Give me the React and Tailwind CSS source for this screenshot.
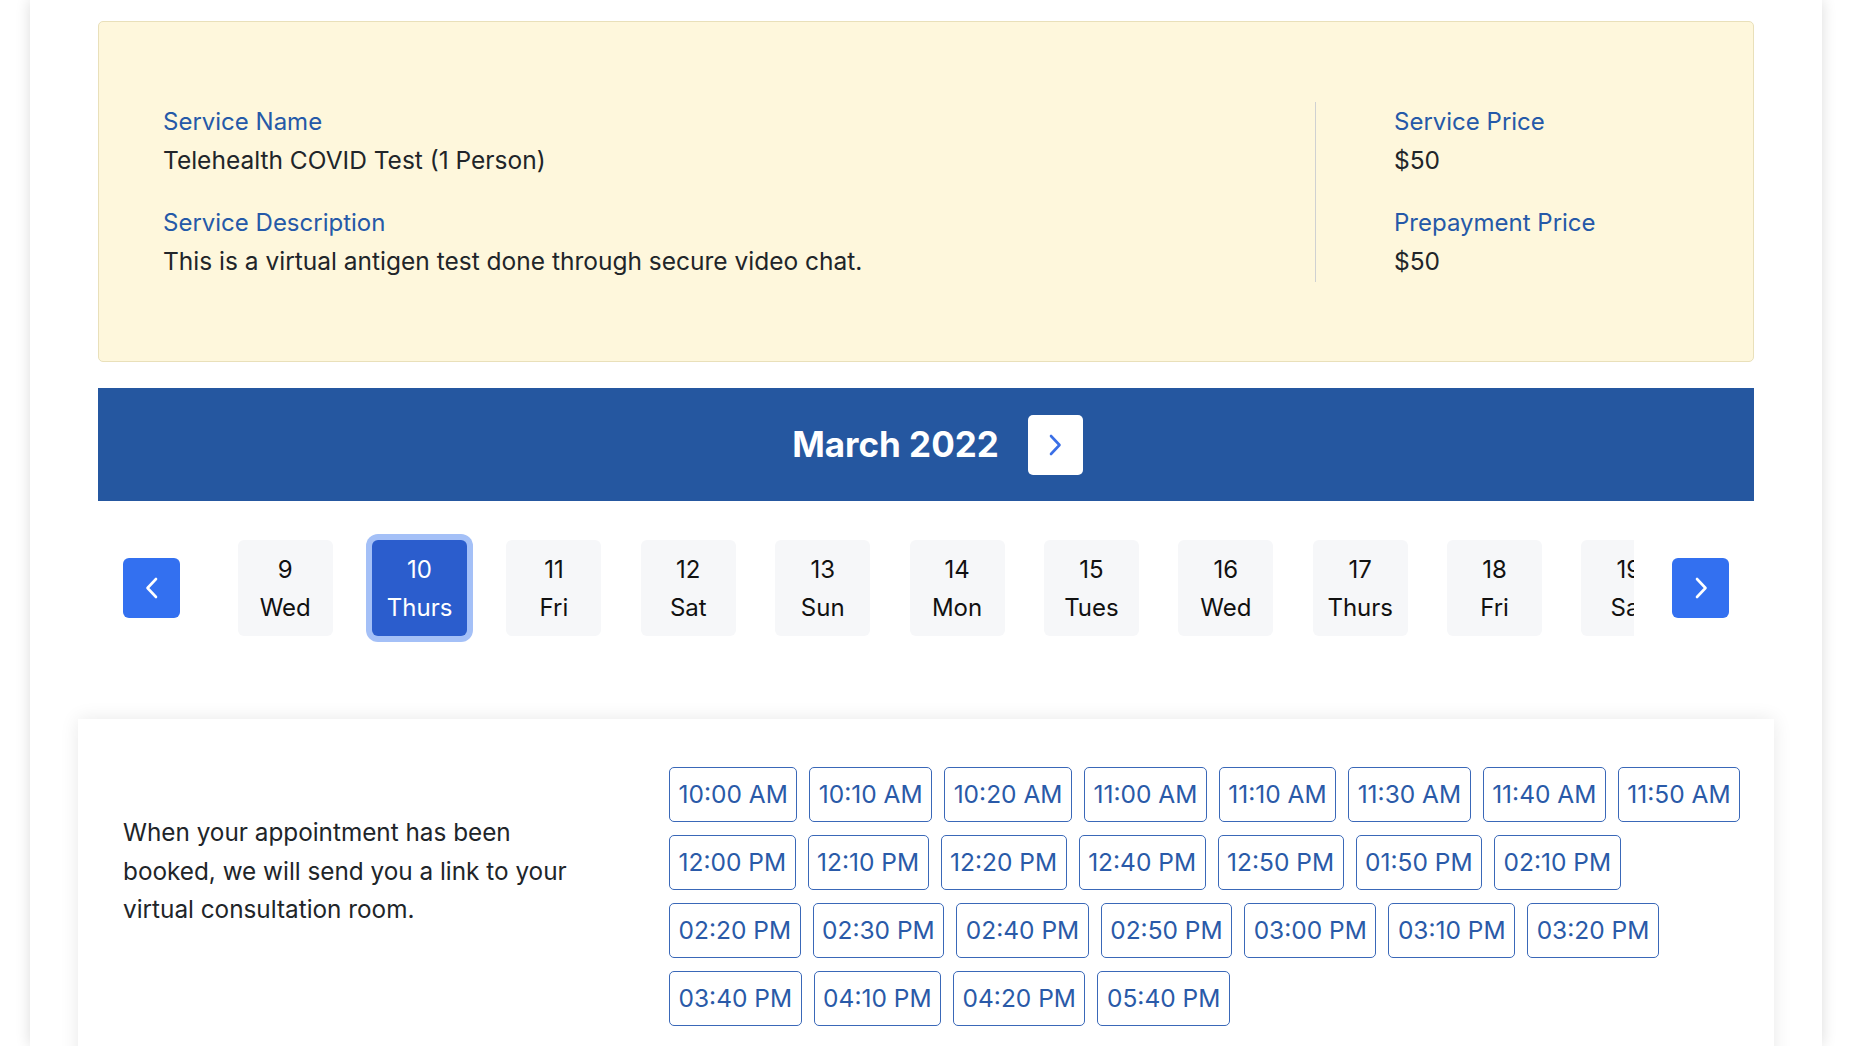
import React from 'react';

const days = [
  [9, 'Wed'], [10, 'Thurs'], [11, 'Fri'], [12, 'Sat'], [13, 'Sun'], [14, 'Mon'],
  [15, 'Tues'], [16, 'Wed'], [17, 'Thurs'], [18, 'Fri'], [19, 'Sat'],
];

const slotRows = [
  ['10:00 AM', '10:10 AM', '10:20 AM', '11:00 AM', '11:10 AM', '11:30 AM', '11:40 AM', '11:50 AM'],
  ['12:00 PM', '12:10 PM', '12:20 PM', '12:40 PM', '12:50 PM', '01:50 PM', '02:10 PM'],
  ['02:20 PM', '02:30 PM', '02:40 PM', '02:50 PM', '03:00 PM', '03:10 PM', '03:20 PM'],
  ['03:40 PM', '04:10 PM', '04:20 PM', '05:40 PM'],
];

const Chevron = ({ dir = 'right', className = '' }) => (
  <svg width="14" height="22" viewBox="0 0 14 22" fill="none" className={className}>
    <path
      d={dir === 'right' ? 'M3 2 L11.5 11 L3 20' : 'M11 2 L2.5 11 L11 20'}
      stroke="currentColor"
      strokeWidth="2.6"
      strokeLinecap="round"
      strokeLinejoin="round"
    />
  </svg>
);

const Field = ({ label, value, className = '' }) => (
  <div className={className}>
    <div className="text-[#2559a8] leading-[39px]">{label}</div>
    <div className="leading-[39px] text-[24.5px]">{value}</div>
  </div>
);

const App = () => {
  return (
    <div className="h-[1046px] overflow-hidden bg-white font-['Inter','Liberation_Sans',Arial,sans-serif] text-[24px] text-[#212529]">
      <div className="ml-[30px] w-[1792px] h-full bg-white shadow-[0_0_14px_rgba(0,0,0,0.14)] px-[68px] pt-[21px]">
        {/* service info */}
        <div className="h-[341px] rounded-[5px] border border-[#e9e0ba] bg-[#fef7dc] flex items-center px-[64px]">
          <div className="flex-1">
            <Field label="Service Name" value="Telehealth COVID Test (1 Person)" />
            <Field label="Service Description" value="This is a virtual antigen test done through secure video chat." className="mt-[23px]" />
          </div>
          <div className="w-px h-[180px] bg-[#cfd1d2]" />
          <div className="w-[373px] pl-[78px]">
            <Field label="Service Price" value="$50" />
            <Field label="Prepayment Price" value="$50" className="mt-[23px]" />
          </div>
        </div>

        {/* month header */}
        <div className="mt-[26px] h-[113px] bg-[#2557a0] flex items-center justify-center pl-[23px]">
          <h2 className="text-white font-bold text-[35px] leading-none">March 2022</h2>
          <button className="ml-[29px] w-[55px] h-[60px] rounded-[5px] bg-white text-[#3a6fe6] flex items-center justify-center">
            <Chevron />
          </button>
        </div>

        {/* day picker */}
        <div className="mt-[33px] flex items-center px-[25px]">
          <button className="w-[57px] h-[60px] shrink-0 rounded-[6px] bg-[#3370f0] text-white flex items-center justify-center">
            <Chevron dir="left" />
          </button>
          <div className="flex-1 mx-[38px] overflow-hidden py-[6px]">
            <div className="flex">
              {days.map(([num, name]) => {
                const selected = num === 10;
                return (
                  <div
                    key={num}
                    className={
                      selected
                        ? 'shrink-0 w-[95px] h-[96px] mx-[19.7px] pt-[2px] rounded-[6px] bg-[#2b5dcd] text-white ring-[6px] ring-[#a4c0f7] flex flex-col items-center justify-center leading-[38px]'
                        : 'shrink-0 w-[95px] h-[96px] mx-[19.7px] pt-[2px] rounded-[6px] bg-[#f6f7f9] text-[#111] flex flex-col items-center justify-center leading-[38px]'
                    }
                  >
                    <span>{num}</span>
                    <span>{name}</span>
                  </div>
                );
              })}
            </div>
          </div>
          <button className="w-[57px] h-[60px] shrink-0 rounded-[6px] bg-[#3370f0] text-white flex items-center justify-center">
            <Chevron />
          </button>
        </div>

        {/* time slots */}
        <div className="mt-[77px] -mx-[20px] h-[400px] bg-white shadow-[0_0_18px_rgba(0,0,0,0.09)] flex pl-[45px] pt-[48px]">
          <div className="w-[546px] shrink-0">
            <p className="mt-[46px] max-w-[470px] leading-[38.5px] text-[24.3px]">
              When your appointment has been booked, we will send you a link to your virtual consultation room.
            </p>
          </div>
          <div className="flex flex-col gap-[13px]">
            {slotRows.map((row, i) => (
              <div key={i} className="flex gap-[12px]">
                {row.map((t) => (
                  <button
                    key={t}
                    className="rounded-[5px] border border-[#3a68b8] text-[#2a5aa8] px-[8.5px] py-[8px] leading-[37px] text-[24.5px]"
                  >
                    {t}
                  </button>
                ))}
              </div>
            ))}
          </div>
        </div>
      </div>
    </div>
  );
};

export default App;
